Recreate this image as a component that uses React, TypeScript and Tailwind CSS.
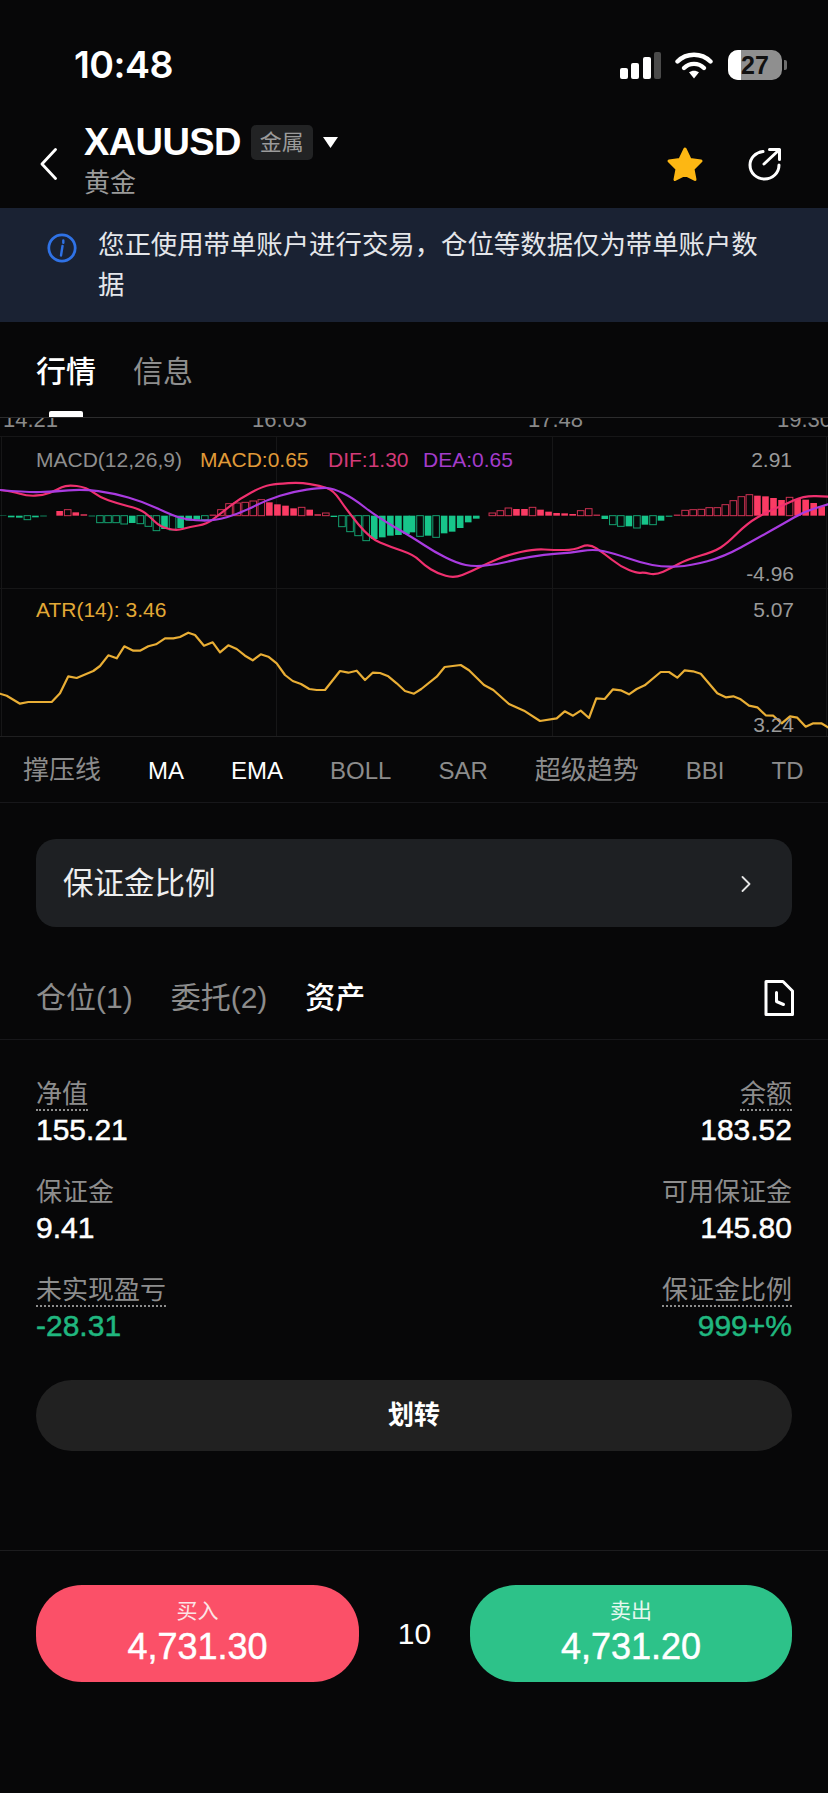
const FONT = "font-['Liberation_Sans','Noto_Sans_CJK_SC',sans-serif]";
// regular face with a hairline stroke, reads like the medium weight in the picture
const MEDIUM = "[-webkit-text-stroke:0.5px_currentColor]";

type Pt = [number, number];

// chart traces, in 3x crop coordinates of each half of the chart
const toPts = (pts: Pt[], xOff: number, yOff: number): Pt[] => pts.map(([x, y]) => [x / 3 + xOff, y / 3 + yOff]);
const toLine = (pts: Pt[]) => pts.map(([x, y]) => `${x.toFixed(1)},${y.toFixed(1)}`).join(" ");
const toCurve = (pts: Pt[]) => {
  let d = `M${pts[0][0].toFixed(1)} ${pts[0][1].toFixed(1)}`;
  for (let i = 1; i < pts.length - 1; i++) {
    const mx = (pts[i][0] + pts[i + 1][0]) / 2;
    const my = (pts[i][1] + pts[i + 1][1]) / 2;
    d += `Q${pts[i][0].toFixed(1)} ${pts[i][1].toFixed(1)} ${mx.toFixed(1)} ${my.toFixed(1)}`;
  }
  const last = pts[pts.length - 1];
  return `${d}L${last[0].toFixed(1)} ${last[1].toFixed(1)}`;
};

const MACD_Y = -8;
const ATR_Y = 167;

const deaLeft: Pt[] = [[0,240],[80,247],[160,245],[250,237],[340,250],[430,275],[520,318],[570,330],[640,333],[720,310],[800,270],[880,245],[960,233],[1000,235],[1060,265],[1130,320],[1242,385]];
const deaRight: Pt[] = [[60,425],[130,460],[180,470],[250,463],[310,447],[390,434],[470,428],[540,417],[600,430],[680,458],[750,472],[830,467],[930,440],[1030,385],[1110,340],[1170,305],[1242,283]];
const difLeft: Pt[] = [[0,240],[40,245],[80,258],[130,256],[170,240],[200,224],[260,232],[300,262],[350,280],[420,297],[450,320],[480,350],[530,363],[570,350],[620,343],[660,312],[720,265],[790,228],[830,222],[900,217],[960,228],[1000,240],[1040,300],[1110,385],[1170,410],[1242,435]];
const difRight: Pt[] = [[30,465],[70,490],[120,505],[170,485],[220,460],[280,435],[360,417],[420,420],[480,420],[525,400],[570,430],[620,470],[670,490],[690,487],[725,495],[770,475],[820,448],[900,425],[940,400],[1000,340],[1060,305],[1110,285],[1170,257],[1242,260]];
const atrLeft: Pt[] = [[0,326],[20,332],[60,356],[85,351],[155,351],[180,325],[205,274],[230,279],[280,258],[300,243],[325,211],[350,220],[373,184],[400,197],[420,197],[445,184],[468,178],[495,160],[520,160],[540,156],[565,143],[585,150],[612,182],[638,172],[660,202],[685,181],[710,192],[735,212],[758,226],[782,208],[805,215],[830,235],[855,270],[878,288],[903,297],[928,312],[950,315],[975,315],[1020,258],[1045,263],[1070,257],[1095,285],[1118,263],[1140,264],[1165,274],[1190,295],[1215,318],[1242,326]];
const atrRight: Pt[] = [[22,312],[68,275],[92,246],[140,240],[165,256],[210,300],[238,315],[285,357],[330,377],[378,408],[428,400],[452,379],[477,392],[500,377],[525,399],[547,340],[572,342],[597,313],[620,316],[645,328],[668,312],[692,301],[740,261],[765,261],[790,278],[812,256],[837,259],[860,266],[910,325],[935,337],[958,334],[980,343],[1005,362],[1030,367],[1055,391],[1078,392],[1103,415],[1128,394],[1150,398],[1175,425],[1198,415],[1222,415],[1242,427]];

const dif = [...toPts(difLeft, 0, MACD_Y), ...toPts(difRight, 414, MACD_Y)];
const dea = [...toPts(deaLeft, 0, MACD_Y), ...toPts(deaRight, 414, MACD_Y)];
const atr = [...toPts(atrLeft, 0, ATR_Y), ...toPts(atrRight, 414, ATR_Y)];

// histogram: height in crop px, "o" marks a hollow bar
const barsLeft: (number | string)[] = [-1,-5,-6,"-12o",-5,-2,0,14,"18o",10,4,-2,"-21o","-21o","-21o","-25o",-22,"-24o","-32o","-45o",-40,"-43o",-37,-15,-12,"-12o",3,"18o","36o","38o","40o","44o","48o",40,34,30,22,"25o",18,4,"8o",-4,"-33o","-48o","-60o","-75o",-70,-65,-60,-58,-55];
const barsRight: (number | string)[] = [-50,"-62o",-60,"-65o",-53,-48,-37,-20,-9,0,"8o","15o","23o",20,20,"25o",18,12,8,7,5,"15o","21o",3,-10,"-27o","-32o",-32,"-37o",-27,"-27o",-15,-3,3,"16o","18o","19o","24o","24o","33o","45o","57o","63o",60,58,53,47,"55o",50,48,38,28];

const Bars = ({ data, start, step, xOff }: { data: (number | string)[]; start: number; step: number; xOff: number }) => (
  <>
    {data.map((raw, i) => {
      const hollow = typeof raw === "string";
      const v = parseFloat(String(raw));
      if (v === 0) return null;
      const color = v > 0 ? "#fb3b64" : "#17c58a";
      const h = Math.abs(v) / 3;
      const base = 317 / 3 + MACD_Y;
      const x = (start + step * i) / 3 + xOff;
      return (
        <rect
          key={i}
          x={x - 3.3}
          y={v > 0 ? base - h : base}
          width={6.6}
          height={h}
          fill={hollow ? "none" : color}
          stroke={hollow ? color : "none"}
          strokeWidth={hollow ? 1 : 0}
          opacity={hollow ? 0.8 : 1}
        />
      );
    })}
  </>
);

const Chart = () => (
  <div className="relative h-[319px] overflow-hidden text-[21px] leading-[24px]">
    <svg viewBox="0 0 828 319" className="absolute inset-0 h-full w-full" fill="none">
      <g stroke="#161617" strokeWidth="1">
        <path d="M0 18.5H828M0 170.5H828" />
        <path d="M276.5 18V319M552.5 18V319M1.5 18V319M826.5 18V319" />
      </g>
      <path d="M0 318.5H828" stroke="#1f1f20" />
      <Bars data={barsLeft} start={9.5} step={24.2} xOff={0} />
      <Bars data={barsRight} start={-6} step={24.1} xOff={414} />
      <g strokeWidth="2.2" strokeLinejoin="round" strokeLinecap="round">
        <path stroke="#f0306f" d={toCurve(dif)} />
        <path stroke="#a93be0" d={toCurve(dea)} />
        <polyline stroke="#e9ae35" points={toLine(atr)} />
      </g>
    </svg>
    <span className="absolute left-[3px] top-[-10px] text-[22px] text-[#8a8a8a]">14.21</span>
    <span className="absolute left-[252px] top-[-10px] text-[22px] text-[#8a8a8a]">16.03</span>
    <span className="absolute left-[528px] top-[-10px] text-[22px] text-[#8a8a8a]">17.48</span>
    <span className="absolute left-[777px] top-[-10px] text-[22px] text-[#8a8a8a]">19.30</span>

    <span className="absolute left-[36px] top-[30px] text-[#8e8e8e]">MACD(12,26,9)</span>
    <span className="absolute left-[200px] top-[30px] text-[#e09a38]">MACD:0.65</span>
    <span className="absolute left-[328px] top-[30px] text-[#d23a78]">DIF:1.30</span>
    <span className="absolute left-[423px] top-[30px] text-[#a43ccb]">DEA:0.65</span>
    <span className="absolute right-[36px] top-[30px] text-[#9a9a9a]">2.91</span>
    <span className="absolute right-[34px] top-[144px] text-[#9a9a9a]">-4.96</span>
    <span className="absolute left-[36px] top-[180px] text-[#e2a936]">ATR(14): 3.46</span>
    <span className="absolute right-[34px] top-[180px] text-[#9a9a9a]">5.07</span>
    <span className="absolute right-[34px] top-[295px] text-[#9a9a9a]">3.24</span>
  </div>
);

const indicators = [
  { name: "撑压线", on: false, cjk: true },
  { name: "MA", on: true },
  { name: "EMA", on: true },
  { name: "BOLL", on: false },
  { name: "SAR", on: false },
  { name: "超级趋势", on: false, cjk: true },
  { name: "BBI", on: false },
  { name: "TD", on: false },
];

const stats = [
  { label: "净值", value: "155.21", dotted: true },
  { label: "余额", value: "183.52", dotted: true, right: true },
  { label: "保证金", value: "9.41" },
  { label: "可用保证金", value: "145.80", right: true },
  { label: "未实现盈亏", value: "-28.31", dotted: true, green: true },
  { label: "保证金比例", value: "999+%", dotted: true, right: true, green: true },
];

export default function App() {
  return (
    <div className={`${FONT} flex h-[1793px] w-[828px] flex-col overflow-hidden bg-[#070708] text-white`}>
      {/* status bar */}
      <div className="relative flex h-[108px] shrink-0 items-start justify-between pl-[74px] pr-[41px] pt-[42px]">
        <span className="font-['Inter',sans-serif] text-[37.500px] font-semibold leading-[46px] tracking-[-0.5px]">10:48</span>
        <div className="flex items-center pt-[8px]">
          <div className="flex h-[27px] items-end gap-[3.5px]">
            <div className="h-[11px] w-[8px] rounded-[2px] bg-white" />
            <div className="h-[16px] w-[8px] rounded-[2px] bg-white" />
            <div className="h-[22px] w-[8px] rounded-[2px] bg-white" />
            <div className="h-[27px] w-[7px] rounded-[2px] bg-[#4a4a4a]" />
          </div>
          <svg viewBox="0 0 38 28" className="ml-[14px] h-[28px] w-[38px]" fill="none">
            <path d="M2.5 10.5C11.5 1.5 26.5 1.5 35.5 10.5" stroke="#fff" strokeWidth="4.4" strokeLinecap="round" />
            <path d="M9 17C14.500 11.500 23.500 11.500 29 17" stroke="#fff" strokeWidth="4.4" strokeLinecap="round" />
            <path d="M14 21.300C16.800 19.200 21.200 19.200 24 21.300L19 27.500Z" fill="#fff" />
          </svg>
          <div className="relative ml-[15px] flex h-[30px] w-[54px] items-center justify-center overflow-hidden rounded-[10px] bg-[#8f8f8f]">
            <div className="absolute inset-y-0 left-0 w-[13px] bg-white" />
            <span className="relative text-[25px] font-bold leading-none text-[#111]">27</span>
          </div>
          <div className="ml-[2px] h-[10px] w-[3px] rounded-r-[2px] bg-[#6e6e6e]" />
        </div>
      </div>

      {/* symbol header */}
      <div className="flex h-[100px] shrink-0 items-start pl-[40px] pr-[46px]">
        <svg viewBox="0 0 17 32" className="mt-[40px] h-[32px] w-[17px]" fill="none">
          <path d="M15.500 1.500L2 16L15.500 30.500" stroke="#fff" strokeWidth="2.800" strokeLinecap="round" strokeLinejoin="round" />
        </svg>
        <div className="ml-[27px] mt-[16px] flex flex-col">
          <div className="flex items-center">
            <span className="text-[38px] font-bold leading-[36px] tracking-[-0.6px]">XAUUSD</span>
            <span className="ml-[10px] flex h-[35px] w-[62px] items-center justify-center rounded-[5px] bg-[#222324] text-[22px] text-[#9b9b9b]">金属</span>
            <svg viewBox="0 0 15 11" className="ml-[10px] h-[11px] w-[15px]">
              <path d="M0 0H15L7.500 11Z" fill="#fff" />
            </svg>
          </div>
          <span className="mt-[5px] text-[26px] leading-[36px] text-[#9a9a9a]">黄金</span>
        </div>
        <div className="ml-auto mt-[38px] flex items-center">
          <svg viewBox="0 0 38 36" className="h-[36px] w-[38px]">
            <path
              d="M19 3L24 13.500L35 15L27 23L29 33.500L19 28.500L9 33.500L11 23L3 15L14 13.500Z"
              fill="#fdb713"
              stroke="#fdb713"
              strokeWidth="3"
              strokeLinejoin="round"
            />
          </svg>
          <svg viewBox="0 0 34 34" className="ml-[44px] h-[34px] w-[34px]" fill="none" stroke="#fff" strokeWidth="3" strokeLinecap="round" strokeLinejoin="round">
            <path d="M15 4.500C7.500 5.500 2 11 2 18C2 26 8.500 32 16.500 32C24.500 32 31 26 31 18" />
            <path d="M16 17L31 3" />
            <path d="M21.500 2.500H31.500V12.500" />
          </svg>
        </div>
      </div>

      {/* copy-trade notice */}
      <div className="flex h-[114px] shrink-0 items-start bg-[#1a2233] pl-[47px] pt-[25px]">
        <svg viewBox="0 0 30 30" className="h-[30px] w-[30px] shrink-0" fill="none">
          <circle cx="15" cy="15" r="13.200" stroke="#2f72e6" strokeWidth="2.800" />
          <path d="M16.300 7.500V9.800M15.500 13L14 22.500" stroke="#2f72e6" strokeWidth="2.400" strokeLinecap="round" />
        </svg>
        <p className="ml-[21px] mt-[-8px] w-[670px] text-[26.400px] leading-[40px] text-[#e4e6ea]">
          您正使用带单账户进行交易，仓位等数据仅为带单账户数据
        </p>
      </div>

      {/* page tabs */}
      <div className="flex h-[96px] shrink-0 items-start gap-[37px] border-b border-[#2c2c2d] pl-[36px] pt-[28px] text-[30px] leading-[44px]">
        <div className="relative h-[67px] font-medium">
          <span>行情</span>
          <div className="absolute bottom-0 left-[13px] h-[6px] w-[34px] rounded-t-[2px] bg-white" />
        </div>
        <span className="text-[#8f8f8f]">信息</span>
      </div>

      <Chart />

      {/* indicator picker */}
      <div className="flex h-[66px] shrink-0 items-center gap-[47px] overflow-hidden whitespace-nowrap border-b border-[#17171a] pl-[23px] pt-[2px] text-[#8c8c8c]">
        {indicators.map((item) => (
          <span key={item.name} className={`${item.cjk ? "text-[26px]" : "text-[24px]"} ${item.on ? "text-white" : ""}`}>
            {item.name}
          </span>
        ))}
      </div>

      {/* margin ratio card */}
      <div className="mx-[36px] mt-[36px] flex h-[88px] shrink-0 items-center justify-between rounded-[20px] bg-[#1e2023] pl-[27px] pr-[41px] pt-[2px]">
        <span className="text-[30.500px] text-[#eeeeee]">保证金比例</span>
        <svg viewBox="0 0 10 16" className="h-[16px] w-[10px]" fill="none">
          <path d="M1.500 1L8.500 8L1.500 15" stroke="#e4e4e4" strokeWidth="1.800" strokeLinecap="round" strokeLinejoin="round" />
        </svg>
      </div>

      {/* account tabs */}
      <div className="flex h-[113px] shrink-0 items-center border-b border-[#17171a] pl-[36px] pr-[34px] pt-[29px] text-[30px] text-[#8c8c8c]">
        <span>仓位(1)</span>
        <span className="ml-[38px]">委托(2)</span>
        <span className="ml-[38px] font-medium text-white">资产</span>
        <svg viewBox="0 0 30 36" className="ml-auto h-[36px] w-[30px]" fill="none" stroke="#fff" strokeWidth="3" strokeLinejoin="round">
          <path d="M2 1.500H19L28.500 11V34.500H2Z" />
          <path d="M12.500 12.500V21.500L19.500 24.500" strokeLinecap="round" />
        </svg>
      </div>

      {/* account figures */}
      <div className="mx-[36px] mt-[39px] grid shrink-0 grid-cols-2 gap-y-[28px]">
        {stats.map((s) => (
          <div key={s.label} className={`flex flex-col ${s.right ? "items-end" : "items-start"}`}>
            <span className={`h-[32px] border-b-2 border-dotted text-[26px] leading-[30px] text-[#8d8d8d] ${s.dotted ? "border-[#8d8d8d]" : "border-transparent"}`}>
              {s.label}
            </span>
            <span className={`${MEDIUM} h-[38px] text-[30px] leading-[38px] ${s.green ? "text-[#20b77f]" : "text-white"}`}>
              {s.value}
            </span>
          </div>
        ))}
      </div>

      <button className="mx-[36px] mt-[35px] flex h-[71px] shrink-0 items-center justify-center rounded-full bg-[#212121] text-[26px] font-bold text-white">
        划转
      </button>

      {/* order bar */}
      <div className="mt-[99px] flex flex-1 items-start border-t border-[#1c1c1e] px-[36px] pt-[34px]">
        <button className="flex h-[97px] w-[323px] flex-col items-center rounded-[46px] bg-[#fb5068] pt-[12px]">
          <span className="text-[21px] leading-[28px] text-[#fbe4e6]">买入</span>
          <span className={`${MEDIUM} text-[36px] leading-[44px]`}>4,731.30</span>
        </button>
        <span className="flex h-[97px] w-[111px] items-center justify-center text-[30px]">10</span>
        <button className="flex h-[97px] w-[322px] flex-col items-center rounded-[46px] bg-[#2dc289] pt-[12px]">
          <span className="text-[21px] leading-[28px] text-[#e6f8ef]">卖出</span>
          <span className={`${MEDIUM} text-[36px] leading-[44px]`}>4,731.20</span>
        </button>
      </div>
    </div>
  );
}
